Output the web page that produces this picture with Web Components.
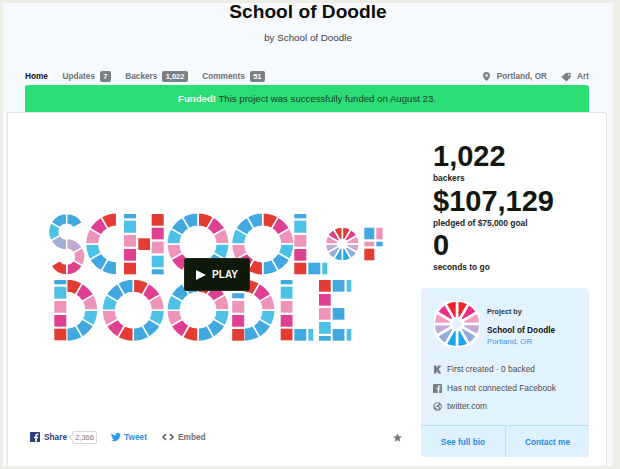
<!DOCTYPE html>
<html>
<head>
<meta charset="utf-8">
<title>School of Doodle</title>
<style>
  html, body { margin: 0; background: #eeeee6; }
  body { font-family: "Liberation Sans", Arial, sans-serif; width: 620px; height: 469px; overflow: hidden; }
</style>
</head>
<body>
<project-page>
  <project-header slot="header" title-text="School of Doodle" byline="by School of Doodle"></project-header>
  <project-nav slot="nav"></project-nav>
  <funded-banner slot="banner"><b>Funded!</b> This project was successfully funded on August 23.</funded-banner>
  <project-card slot="card">
    <video-box slot="video"></video-box>
    <share-bar slot="share"></share-bar>
    <stat-block slot="stats" value="1,022" label="backers"></stat-block>
    <stat-block slot="stats" value="$107,129" label="pledged of $75,000 goal"></stat-block>
    <stat-block slot="stats" value="0" label="seconds to go"></stat-block>
    <creator-panel slot="panel"></creator-panel>
  </project-card>
</project-page>

<script>
"use strict";

const BLUE = "#41a8e0";
const SKY = "#4dc2e6";
const PINK = "#ee94bb";
const MAGENTA = "#df4090";
const RED = "#e23c35";

// angle 0 is at the top, clockwise
function polar(cx, cy, r, deg) {
  const a = ((deg - 90) * Math.PI) / 180;
  return `${(cx + r * Math.cos(a)).toFixed(2)} ${(cy + r * Math.sin(a)).toFixed(2)}`;
}

function segment(cx, cy, ro, ri, from, to, color, gap = 1.5) {
  return `<path d="M${polar(cx, cy, ro, from)}A${ro} ${ro} 0 0 1 ${polar(cx, cy, ro, to)}L${polar(cx, cy, ri, to)}A${ri} ${ri} 0 0 0 ${polar(cx, cy, ri, from)}Z" fill="${color}" stroke="#fff" stroke-width="${gap}"/>`;
}

function ring(cx, cy, colors, start = 0, ro = 31.2, ri = 17.8, gap = 1.5) {
  return colors
    .map((c, i) => segment(cx, cy, ro, ri, start + i * 30, start + (i + 1) * 30, c, gap))
    .join("");
}

function box(x, w, y, h, color) {
  return `<rect x="${x}" y="${y}" width="${w}" height="${h}" fill="${color}"/>`;
}

// a column of blocks: [top, bottom, colour]
function column(x, w, rows, dy = 0) {
  return rows.map((r) => box(x, w, r[0] + dy, r[1] - r[0], r[2])).join("");
}

const FULL = [RED, MAGENTA, PINK, SKY, BLUE, BLUE, RED, MAGENTA, PINK, SKY, BLUE, BLUE];
const HALF = [RED, MAGENTA, PINK, SKY, BLUE, BLUE];
const FLOWER = ["#f0222e", "#f02c85", "#f79cc0", "#c4aada", "#93aed8", "#1aa5ef", "#1aa5ef", "#93aed8", "#c4aada", "#f79cc0", "#f02c85", "#f0222e"];
const SMALL = [RED, MAGENTA, PINK, "#c2acd4", "#93aed8", "#2fa8e6", "#2fa8e6", "#93aed8", "#c2acd4", PINK, MAGENTA, RED];

const STEM = [[214, 218.3, BLUE], [220.7, 232.7, SKY], [235, 246.7, PINK], [249, 260.7, MAGENTA], [262.7, 274.3, RED]];
const STEM_UP = [[214, 225.7, RED], [227.7, 239.3, MAGENTA], [241.7, 253.3, PINK], [255.7, 267.3, SKY], [269.3, 274.3, BLUE]];

function drawLogo() {
  let s = "";
  // S
  s += segment(66.7, 231.7, 18.2, 7.5, -60, 0, BLUE);
  s += segment(66.7, 231.7, 18.2, 7.5, 0, 60, BLUE);
  s += segment(66.7, 231.7, 18.2, 7.5, -120, -60, SKY);
  s += segment(66.7, 231.7, 18.2, 7.5, 180, 240, "#a0aed6");
  s += segment(66.7, 256.7, 18.2, 7.5, 0, 60, "#c3a9d0");
  s += segment(66.7, 256.7, 18.2, 7.5, 60, 120, PINK);
  s += segment(66.7, 256.7, 18.2, 7.5, 120, 180, MAGENTA);
  s += segment(66.7, 256.7, 18.2, 7.5, 180, 240, RED);
  // C
  s += ring(116.7, 244, [BLUE, BLUE, SKY, PINK, MAGENTA, RED], 180);
  // H
  s += column(124, 12, STEM);
  s += box(138.3, 11.7, 238.3, 11.7, RED);
  s += column(151.7, 12, STEM_UP);
  // O O
  s += ring(198, 244, FULL);
  s += ring(262.7, 244, FULL);
  // L
  s += column(294.3, 12, STEM);
  s += box(308.3, 12, 262.7, 11.6, BLUE);
  s += box(322.3, 5, 262.7, 11.6, SKY);
  // small "of"
  s += ring(342.3, 244, SMALL, 0, 17, 4.5, 1.6);
  s += box(364.3, 10, 227.7, 11.6, BLUE);
  s += box(376.3, 6.4, 227.7, 11.6, PINK);
  s += box(364.3, 10, 241.7, 4.6, PINK);
  s += box(376.3, 6.4, 241.7, 4.6, BLUE);
  s += box(364.3, 10, 248.7, 11.6, RED);
  // D
  s += ring(66.7, 310.3, HALF);
  s += column(54.3, 12, STEM, 66);
  // O O
  s += ring(133.3, 310.3, FULL);
  s += ring(198, 310.3, FULL);
  // D
  s += ring(244, 310.3, HALF);
  s += column(232.2, 12, [[293.3, 298.3, BLUE], [301, 312.7, PINK], [315, 326.7, MAGENTA], [329, 340.7, RED]]);
  // L
  s += column(280.7, 11.8, STEM, 66);
  s += box(294.3, 12, 329, 11.7, BLUE);
  s += box(308.3, 5, 329, 11.7, SKY);
  // E
  s += column(319, 11.7, [[280, 291.7, RED], [294, 305.7, MAGENTA], [308, 319.7, PINK], [322, 333.7, SKY], [336, 340.7, BLUE]]);
  s += box(332.7, 11.7, 280, 11.7, BLUE);
  s += box(346.7, 4.6, 280, 11.7, SKY);
  s += box(332.7, 11.7, 308, 11.7, BLUE);
  s += box(332.7, 11.7, 329, 11.7, BLUE);
  s += box(346.7, 4.6, 329, 11.7, SKY);
  return s;
}

function icon(name, size = 10, color = "#7c7f82") {
  const paths = {
    pin: `<path fill-rule="evenodd" d="M5 0a3.9 3.9 0 0 0-3.9 3.9C1.100 6.600 5 10 5 10s3.900-3.400 3.900-6.100A3.900 3.900 0 0 0 5 0zm0 2.400a1.500 1.500 0 1 1 0 3 1.500 1.500 0 0 1 0-3z"/>`,
    tag: `<path fill-rule="evenodd" d="M.4 4.900 4.900.9 9.600.8l.1 4.500-4.200 4.300zM7.700 2a.8.8 0 1 0 .01 0z"/>`,
    fb: `<path fill-rule="evenodd" d="M.5 0h9a.5.5 0 0 1 .5.5v9a.5.500 0 0 1-.5.5H6.900V6.200h1.300l.2-1.500H6.900v-1c0-.4.1-.7.700-.7h.8V1.700c-.2 0-.6-.1-1.200-.1-1.200 0-1.900.7-1.900 2v1.100H4v1.500h1.300V10H.5a.5.500 0 0 1-.5-.5v-9A.5.500 0 0 1 .5 0z"/>`,
    bird: `<path d="M10 2a4 4 0 0 1-1.200.3A2 2 0 0 0 9.700 1.200a4 4 0 0 1-1.300.5 2 2 0 0 0-3.500 1.900A5.800 5.800 0 0 1 .7 1.500a2 2 0 0 0 .6 2.700A2 2 0 0 1 .4 4a2 2 0 0 0 1.600 2 2 2 0 0 1-.9 0 2 2 0 0 0 1.900 1.400A4.100 4.100 0 0 1 0 8.200 5.800 5.800 0 0 0 9 3c.4-.3.7-.6 1-1z"/>`,
    kick: `<path d="M1 .6h2.800v2.700L5.800.6h2.700l.4.8-2.600 3.500 2.700 3.700-.4.8H5.900L3.800 6.700v2.700H1z"/>`,
    globe: `<path fill-rule="evenodd" d="M5 .2a4.800 4.800 0 1 0 0 9.600A4.800 4.800 0 0 0 5 .2zM2.100 2.800l1.500-1.400 2.300.1.600 1-1.300.7-.5 1L3.600 4 3 5l1.100.6h1.300l.9.900-.4 1.400-1.300 1.100-.5-1.800-1.300-1.200-1.400-1.200zm5.300.7 1 .4.500 1.500-.7 1.400-.7-1.100-.8-.6z"/>`,
    star: `<path d="m5 .3 1.500 3.200 3.400.4-2.500 2.400.7 3.400L5 8.100 1.900 9.700l.7-3.400L.1 3.900l3.400-.4z"/>`,
  };
  return `<svg width="${size}" height="${size}" viewBox="0 0 10 10" fill="${color}" style="display:block;flex:none">${paths[name]}</svg>`;
}

class ProjectPage extends HTMLElement {
  constructor() {
    super();
    this.attachShadow({ mode: "open" }).innerHTML = `
      <style>
        :host { display: block; margin: 3px 7px 0 3px; height: 463px; background: #f6fafc; color: #222; }
        .nav { display: block; margin: 0 24px 0 22px; }
        .card { display: block; margin: 0 6px 0 4px; }
      </style>
      <slot name="header"></slot>
      <div class="nav"><slot name="nav"></slot><slot name="banner"></slot></div>
      <div class="card"><slot name="card"></slot></div>`;
  }
}

class ProjectHeader extends HTMLElement {
  constructor() {
    super();
    this.attachShadow({ mode: "open" }).innerHTML = `
      <style>
        :host { display: block; height: 65px; text-align: center; }
        h1 { margin: 0; font-size: 19.150px; line-height: 18px; font-weight: bold; color: #0c0c0c; }
        p { margin: 9.500px 0 0; font-size: 9.800px; line-height: 14px; color: #3c3c44; }
      </style>
      <h1>${this.getAttribute("title-text")}</h1>
      <p>${this.getAttribute("byline")}</p>`;
  }
}

class NavTab extends HTMLElement {
  constructor() {
    super();
    this.attachShadow({ mode: "open" }).innerHTML = `
      <style>
        :host { display: flex; align-items: center; gap: 5px; font-size: 8.250px; font-weight: bold; color: #6d7075; white-space: nowrap; }
        :host([active]) { color: #111; }
        span { background: #7b7e82; color: #fff; border-radius: 2px; font-size: 7.500px; line-height: 11px; padding: 0 3.300px; }
        span:empty { display: none; }
      </style>
      <slot></slot><span>${this.getAttribute("count") || ""}</span>`;
  }
}

class ProjectNav extends HTMLElement {
  constructor() {
    super();
    this.attachShadow({ mode: "open" }).innerHTML = `
      <style>
        :host { display: flex; align-items: center; height: 17px; font-family: inherit; }
        .tabs, .meta { display: flex; align-items: center; }
        .tabs { gap: 14.500px; }
        .meta { margin-left: auto; gap: 14px; }
        .meta nav-tab { gap: 6px; }
      </style>
      <div class="tabs">
        <nav-tab active>Home</nav-tab>
        <nav-tab count="7">Updates</nav-tab>
        <nav-tab count="1,022">Backers</nav-tab>
        <nav-tab count="51">Comments</nav-tab>
      </div>
      <div class="meta">
        <nav-tab>${icon("pin", 9)}Portland, OR</nav-tab>
        <nav-tab>${icon("tag", 10)}Art</nav-tab>
      </div>`;
  }
}

class FundedBanner extends HTMLElement {
  constructor() {
    super();
    this.attachShadow({ mode: "open" }).innerHTML = `
      <style>
        :host { display: block; height: 27px; background: #2bdd72; border-radius: 3px 3px 0 0; text-align: center; font-size: 9.620px; line-height: 27px; color: #17432a; }
        ::slotted(b) { color: #f6fff9; }
      </style>
      <slot></slot>`;
  }
}

class ProjectCard extends HTMLElement {
  constructor() {
    super();
    this.attachShadow({ mode: "open" }).innerHTML = `
      <style>
        :host { display: grid; grid-template-columns: 413px 1fr; height: 353px; box-sizing: border-box; background: #fff; border: 1px solid #dfe1e2; border-bottom: 0; border-radius: 3px 3px 0 0; }
        .main { display: flex; flex-direction: column; }
        .side { padding: 31px 17px 0 0; }
        .stats { padding-left: 12px; height: 144px; }
      </style>
      <div class="main"><slot name="video"></slot><slot name="share"></slot></div>
      <div class="side">
        <div class="stats"><slot name="stats"></slot></div>
        <slot name="panel"></slot>
      </div>`;
  }
}

class VideoBox extends HTMLElement {
  constructor() {
    super();
    this.attachShadow({ mode: "open" }).innerHTML = `
      <style>
        :host { display: block; position: relative; height: 300px; }
        svg { display: block; }
        .play { position: absolute; left: 176px; top: 145px; width: 66px; height: 33px; box-sizing: border-box; display: flex; align-items: center; justify-content: center; gap: 6px; background: #0e190a; border: 1px solid #24301f; border-radius: 2px; color: #fff; font-size: 10px; font-weight: bold; }
        .play i { width: 0; height: 0; border-left: 10px solid #fff; border-top: 5.500px solid transparent; border-bottom: 5.500px solid transparent; }
      </style>
      <svg width="413" height="300" viewBox="8 113 413 300" role="img" aria-label="School of Doodle logo">${drawLogo()}</svg>
      <div class="play"><i></i>PLAY</div>`;
  }
}

class ShareBar extends HTMLElement {
  constructor() {
    super();
    this.attachShadow({ mode: "open" }).innerHTML = `
      <style>
        :host { display: flex; align-items: center; height: 24px; margin-top: 12px; padding: 0 19px 0 22px; font-size: 8.300px; font-weight: bold; color: #6d7075; }
        .item { display: flex; align-items: center; }
        .fb { color: #2b3f7c; gap: 4px; }
        .count { position: relative; margin-left: 1px; width: 25px; box-sizing: border-box; text-align: center; border: 1px solid #d8d8d8; border-radius: 2px; font-weight: normal; font-size: 7.500px; line-height: 11px; color: #777; background: #fff; }
        .count::before { content: ""; position: absolute; left: -3px; top: 3px; width: 4px; height: 4px; background: #fff; border-left: 1px solid #d8d8d8; border-bottom: 1px solid #d8d8d8; transform: rotate(45deg); }
        .tw { color: #2a8fe6; gap: 3px; margin-left: 14px; }
        .em { gap: 4px; margin-left: 15px; }
        .star { margin-left: auto; }
      </style>
      <div class="item fb">${icon("fb", 10, "#2b3f7c")}Share<span class="count">2,366</span></div>
      <div class="item tw">${icon("bird", 10, "#2a9ae6")}Tweet</div>
      <div class="item em"><svg width="12" height="8" viewBox="0 0 12 8" fill="none" stroke="#55585c" stroke-width="1.500"><path d="M4 1 1 4l3 3M8 1l3 3-3 3"/></svg>Embed</div>
      <div class="item star">${icon("star", 9)}</div>`;
  }
}

class StatBlock extends HTMLElement {
  constructor() {
    super();
    this.attachShadow({ mode: "open" }).innerHTML = `
      <style>
        :host { display: flow-root; height: 44.700px; color: #12180f; }
        .v { font-size: 29px; font-weight: bold; line-height: 29px; margin-top: -2px; margin-bottom: 2px; }
        .l { font-size: 8.400px; font-weight: bold; line-height: 10px; color: #222; }
      </style>
      <div class="v">${this.getAttribute("value")}</div>
      <div class="l">${this.getAttribute("label")}</div>`;
  }
}

class CreatorPanel extends HTMLElement {
  constructor() {
    super();
    this.attachShadow({ mode: "open" }).innerHTML = `
      <style>
        :host { height: 169px; box-sizing: border-box; background: #e3f3fe; border-radius: 4px; font-size: 8.400px; color: #4c4c4c; display: flex; flex-direction: column; overflow: hidden; }
        .who { display: flex; gap: 7px; padding: 13px 0 0 13px; height: 62px; }
        .who svg { flex: none; }
        .txt { padding-top: 5px; }
        .by { font-size: 7.200px; font-weight: bold; color: #333; line-height: 11px; }
        .name { font-size: 8.300px; font-weight: bold; color: #111; line-height: 12px; margin-top: 7px; }
        .loc { font-size: 7.800px; color: #4a90e8; line-height: 11px; }
        ul { list-style: none; margin: 0; padding: 0 0 0 12px; display: flex; flex-direction: column; gap: 5.700px; }
        li { display: flex; align-items: center; gap: 5px; line-height: 13px; }
        .foot { margin-top: auto; height: 31px; display: grid; grid-template-columns: 84px 1fr; background: #dff1fd; border-top: 1px solid #b9e0f8; }
        .foot div { display: flex; align-items: center; justify-content: center; font-size: 8.300px; font-weight: bold; color: #2b8be0; }
        .foot div + div { border-left: 1px solid #b9e0f8; }
      </style>
      <div class="who">
        <svg width="46" height="46" viewBox="0 0 46 46">${ring(23, 23, FLOWER, 0, 23.500, 6, 2.600)}</svg>
        <div class="txt">
          <div class="by">Project by</div>
          <div class="name">School of Doodle</div>
          <div class="loc">Portland, OR</div>
        </div>
      </div>
      <ul>
        <li>${icon("kick", 9)}First created · 0 backed</li>
        <li>${icon("fb", 9)}Has not connected Facebook</li>
        <li>${icon("globe", 9)}twitter.com</li>
      </ul>
      <div class="foot"><div>See full bio</div><div>Contact me</div></div>`;
  }
}

customElements.define("project-page", ProjectPage);
customElements.define("project-header", ProjectHeader);
customElements.define("nav-tab", NavTab);
customElements.define("project-nav", ProjectNav);
customElements.define("funded-banner", FundedBanner);
customElements.define("project-card", ProjectCard);
customElements.define("video-box", VideoBox);
customElements.define("share-bar", ShareBar);
customElements.define("stat-block", StatBlock);
customElements.define("creator-panel", CreatorPanel);
</script>
</body>
</html>
